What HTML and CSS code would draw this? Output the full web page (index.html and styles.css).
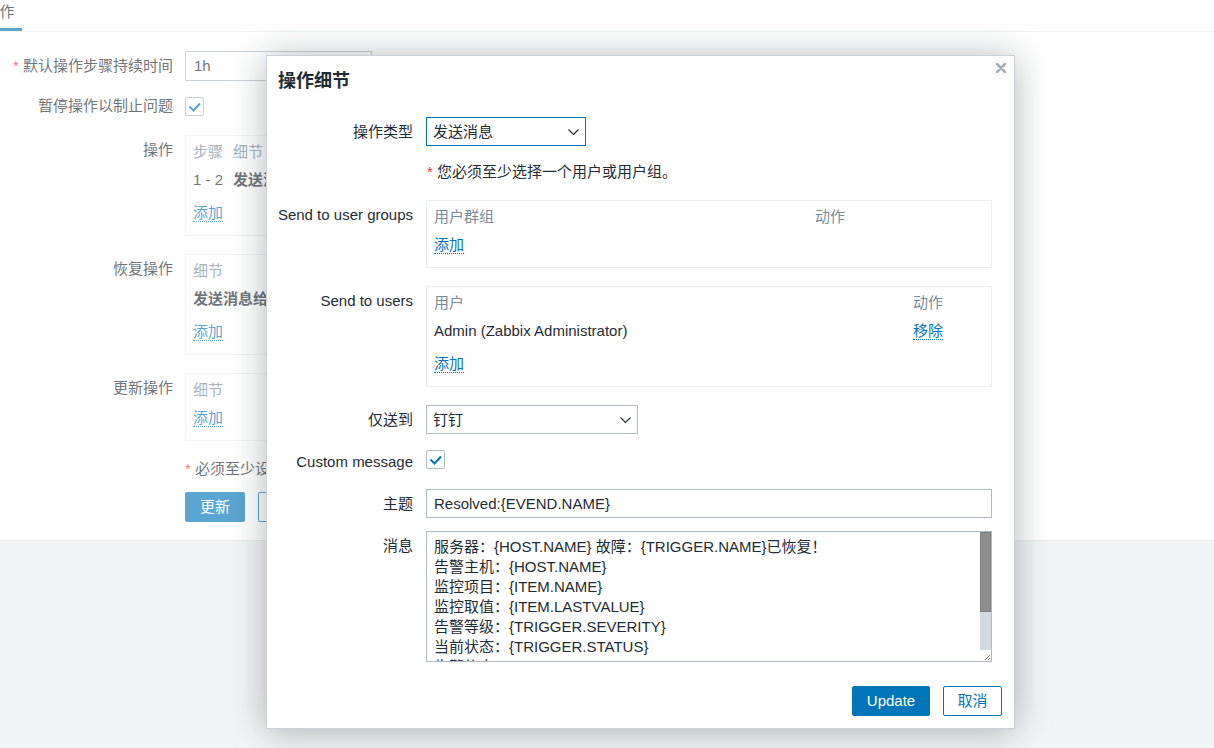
FILE: index.html
```html
<!DOCTYPE html>
<html lang="zh-CN">
<head>
<meta charset="utf-8">
<title>操作细节</title>
<link rel="stylesheet" href="styles.css">
</head>
<body>
<div class="page">
  <div class="tabs"><span class="tab">操作</span></div>
  <div class="content">
    <div class="bg-row gap-15">
      <div class="bg-label"><span class="req">*</span>&nbsp;默认操作步骤持续时间</div>
      <div class="bg-input">1h</div>
    </div>
    <div class="bg-row gap-19">
      <div class="bg-label flat">暂停操作以制止问题</div>
      <div class="checkbox bg-check">
        <svg viewBox="0 0 19 19" width="19" height="19"><polyline points="4.5,9.5 8.5,13.5 15,6.5" fill="none" stroke="#0275b8" stroke-width="2"/></svg>
      </div>
    </div>
    <div class="bg-row gap-18">
      <div class="bg-label">操作</div>
      <div class="box bg-box">
        <table class="list">
          <thead><tr><th class="w-step">步骤</th><th>细节</th></tr></thead>
          <tbody><tr><td>1 - 2</td><td class="strong">发送消息给用户: Admin (Zabbix Administrator) 通过 钉钉</td></tr></tbody>
        </table>
        <div class="add-row tall"><a class="link">添加</a></div>
      </div>
    </div>
    <div class="bg-row gap-18">
      <div class="bg-label">恢复操作</div>
      <div class="box bg-box">
        <table class="list">
          <thead><tr><th>细节</th></tr></thead>
          <tbody><tr><td class="strong">发送消息给用户: Admin (Zabbix Administrator) 通过 钉钉</td></tr></tbody>
        </table>
        <div class="add-row tall"><a class="link">添加</a></div>
      </div>
    </div>
    <div class="bg-row gap-18">
      <div class="bg-label">更新操作</div>
      <div class="box bg-box">
        <table class="list">
          <thead><tr><th>细节</th></tr></thead>
        </table>
        <div class="add-row"><a class="link">添加</a></div>
      </div>
    </div>
    <div class="bg-note"><span class="req">*</span> 必须至少设置一个操作或恢复操作或更新操作。</div>
    <div class="bg-buttons">
      <span class="btn primary bg-btn">更新</span>
      <span class="btn outline bg-btn">克隆</span>
    </div>
  </div>
</div>

<div class="overlay"></div>

<div class="dialog">
  <div class="dialog-head">操作细节</div>
  <span class="close">
    <svg viewBox="0 0 10 10" width="10" height="10"><path d="M1 1 L9 9 M9 1 L1 9" stroke="#a3b0b8" stroke-width="2.6" stroke-linecap="round"/></svg>
  </span>

  <div class="frow mb-16">
    <div class="flabel">操作类型</div>
    <div class="ffield">
      <div class="select focused w-type"><span>发送消息</span>
        <svg viewBox="0 0 11 6" width="11" height="6"><polyline points="0.5,0.5 5.5,5.5 10.5,0.5" fill="none" stroke="#1f2c33" stroke-width="1.1"/></svg>
      </div>
    </div>
  </div>

  <div class="frow mb-18">
    <div class="flabel empty"></div>
    <div class="ffield note"><span class="req">*</span> 您必须至少选择一个用户或用户组。</div>
  </div>

  <div class="frow mb-18">
    <div class="flabel">Send to user groups</div>
    <div class="ffield">
      <div class="box">
        <table class="list">
          <thead><tr><th class="w-group">用户群组</th><th>动作</th></tr></thead>
        </table>
        <div class="add-row"><a class="link">添加</a></div>
      </div>
    </div>
  </div>

  <div class="frow mb-18">
    <div class="flabel">Send to users</div>
    <div class="ffield">
      <div class="box">
        <table class="list">
          <thead><tr><th class="w-user">用户</th><th>动作</th></tr></thead>
          <tbody><tr><td>Admin (Zabbix Administrator)</td><td><a class="link">移除</a></td></tr></tbody>
        </table>
        <div class="add-row tall"><a class="link">添加</a></div>
      </div>
    </div>
  </div>

  <div class="frow mb-16">
    <div class="flabel">仅送到</div>
    <div class="ffield">
      <div class="select w-media"><span>钉钉</span>
        <svg viewBox="0 0 11 6" width="11" height="6"><polyline points="0.5,0.5 5.5,5.5 10.5,0.5" fill="none" stroke="#1f2c33" stroke-width="1.1"/></svg>
      </div>
    </div>
  </div>

  <div class="frow mb-17">
    <div class="flabel check-label">Custom message</div>
    <div class="ffield">
      <div class="checkbox">
        <svg viewBox="0 0 19 19" width="19" height="19"><polyline points="4.5,9.5 8.5,13.5 15,6.5" fill="none" stroke="#0275b8" stroke-width="2"/></svg>
      </div>
    </div>
  </div>

  <div class="frow mb-13">
    <div class="flabel">主题</div>
    <div class="ffield">
      <div class="input">Resolved:{EVEND.NAME}</div>
    </div>
  </div>

  <div class="frow">
    <div class="flabel">消息</div>
    <div class="ffield">
      <div class="textarea">
        <div class="textarea-text">服务器：{HOST.NAME} 故障：{TRIGGER.NAME}已恢复！
告警主机：{HOST.NAME}
监控项目：{ITEM.NAME}
监控取值：{ITEM.LASTVALUE}
告警等级：{TRIGGER.SEVERITY}
当前状态：{TRIGGER.STATUS}
告警信息：{TRIGGER.NAME}
告警时间：{EVENT.DATE} {EVENT.TIME}
恢复时间：{EVENT.RECOVERY.DATE} {EVENT.RECOVERY.TIME}</div>
        <div class="scrollbar">
          <div class="scroll-thumb"></div>
          <div class="scroll-track"></div>
          <div class="scroll-corner">
            <svg viewBox="0 0 10 10" width="10" height="10"><path d="M9 4 L4 9 M9 7 L7 9" stroke="#7d7d7d" stroke-width="1"/></svg>
          </div>
        </div>
      </div>
    </div>
  </div>

  <div class="dialog-foot">
    <span class="btn primary w-update">Update</span>
    <span class="btn outline w-cancel">取消</span>
  </div>
</div>
</body>
</html>
```

FILE: styles.css
```css
* { box-sizing: border-box; }

html, body { margin: 0; padding: 0; }

body {
  width: 1214px;
  height: 748px;
  overflow: hidden;
  position: relative;
  background: #ebeef0;
  color: #1f2c33;
  font-family: "Liberation Sans", Arial, "Noto Sans CJK SC", sans-serif;
  font-size: 15px;
  line-height: 20px;
}

/* ---------- background page ---------- */
.tabs {
  height: 32px;
  background: #fff;
  border-bottom: 1px solid #ebeef0;
  display: flex;
  overflow: hidden;
}
.tab {
  margin-left: -23px;
  padding: 2px 7.5px 0;
  height: 31px;
  line-height: 20px;
  border-bottom: 3px solid #0275b8;
}

.content {
  background: #fff;
  padding: 19px 0 18px;
  border-bottom: 1px solid #dfe4e7;
}

.bg-row { display: flex; gap: 12px; }
.gap-15 { margin-bottom: 15px; }
.gap-19 { margin-bottom: 19px; }
.gap-18 { margin-bottom: 18px; }

.bg-label {
  width: 173px;
  flex: none;
  text-align: right;
  padding-top: 5px;
  white-space: nowrap;
}
.bg-label.flat { padding-top: 0; }

.bg-input {
  width: 187px;
  height: 30px;
  border: 1px solid #acbbc2;
  padding: 4px 8px;
}
.bg-check { margin-top: 1px; }

.bg-box { width: 600px; }

.bg-note {
  margin-left: 185px;
  margin-bottom: 13px;
}
.bg-buttons {
  margin-left: 185px;
  display: flex;
  gap: 13px;
}
.bg-btn { width: 60px; }

.req { color: #e33734; }

/* ---------- shared widgets ---------- */
.box {
  border: 1px solid #ebeef0;
  padding: 2px 7px 8px;
}
.list {
  border-collapse: collapse;
  width: 100%;
}
.list th, .list td {
  padding: 4px 0;
  text-align: left;
  vertical-align: top;
  white-space: nowrap;
  line-height: 20px;
}
.list th { font-weight: normal; color: #768d99; }
.list td.strong { font-weight: bold; }
.w-step { width: 40px; }
.w-group { width: 381px; }
.w-user { width: 479px; }

.add-row { padding: 4px 0; }
.add-row.tall { padding: 9px 0 4px; }

.link {
  color: #0275b8;
  border-bottom: 1px dotted #0275b8;
  cursor: pointer;
}

.checkbox {
  width: 19px;
  height: 19px;
  border: 1px solid #acbbc2;
  border-radius: 2px;
  background: #fff;
  display: flex;
}
.checkbox svg { margin: -1px; }

.btn {
  display: inline-flex;
  align-items: center;
  justify-content: center;
  height: 30px;
  border-radius: 2px;
  font-size: 15px;
}
.btn.primary { background: #0275b8; color: #fff; border: 1px solid #0275b8; }
.btn.outline { background: #fff; color: #0275b8; border: 1px solid #0275b8; }

/* ---------- overlay + dialog ---------- */
.overlay {
  position: absolute;
  inset: 0;
  background: rgba(255, 255, 255, 0.35);
}

.dialog {
  position: absolute;
  left: 266px;
  top: 55px;
  width: 749px;
  background: #fff;
  border: 1px solid #c9d2d7;
  box-shadow: 0 2px 34px rgba(31, 44, 51, 0.34);
  padding: 0 12px 12px 11px;
}

.dialog-head {
  padding-top: 13px;
  margin-bottom: 24px;
  font-size: 18px;
  line-height: 24px;
  font-weight: bold;
}

.close {
  position: absolute;
  right: 8px;
  top: 7px;
  width: 10px;
  height: 10px;
  display: flex;
}

.frow { display: flex; gap: 13px; }
.mb-13 { margin-bottom: 13px; }
.mb-16 { margin-bottom: 16px; }
.mb-17 { margin-bottom: 17px; }
.mb-18 { margin-bottom: 18px; }

.flabel {
  width: 135px;
  flex: none;
  display: flex;
  justify-content: flex-end;
  align-items: flex-start;
  white-space: nowrap;
  padding-top: 5px;
}
.flabel.empty { padding-top: 0; }
.flabel.check-label { padding-top: 2px; }

.ffield {
  flex: 1;
  min-width: 0;
  margin-right: 10px;
}
.note { padding-left: 1px; }

.select {
  height: 29px;
  border: 1px solid #acbbc2;
  padding: 0 6px 0 6px;
  display: flex;
  align-items: center;
  justify-content: space-between;
  background: #fff;
}
.select.focused { border-color: #0275b8; }
.w-type { width: 160px; }
.w-media { width: 212px; }

.input {
  height: 29px;
  border: 1px solid #acbbc2;
  padding: 3px 7px;
  line-height: 21px;
}

.textarea {
  display: flex;
  height: 131px;
  border: 1px solid #acbbc2;
  overflow: hidden;
}
.textarea-text {
  flex: 1;
  min-width: 0;
  padding: 5px 7px;
  white-space: pre;
  line-height: 20px;
  overflow: hidden;
}
.scrollbar {
  width: 11px;
  flex: none;
  display: flex;
  flex-direction: column;
}
.scroll-thumb {
  height: 80px;
  background: #8e8e8e;
  border: 1px solid #7f7f7f;
}
.scroll-track {
  flex: 1;
  background: #d3dadf;
}
.scroll-corner {
  height: 11px;
  background: #fff;
  display: flex;
  align-items: flex-end;
  justify-content: flex-end;
}

.dialog-foot {
  margin-top: 24px;
  display: flex;
  justify-content: flex-end;
  gap: 13px;
}
.w-update { width: 78px; }
.w-cancel { width: 59px; }
```
